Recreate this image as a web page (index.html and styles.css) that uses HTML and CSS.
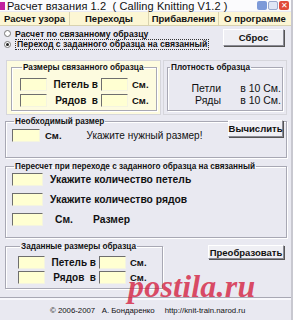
FILE: index.html
```html
<!DOCTYPE html>
<html>
<head>
<meta charset="utf-8">
<link rel="stylesheet" href="styles.css">
</head>
<body>
<div class="win">
  <div class="titlebar">
    <span class="appicon"></span>
    <span class="title">Расчет вязания 1.2&nbsp; ( Calling Knitting V1.2 )</span>
    <span class="wbtns">
      <span class="wb min"></span><span class="wb max"></span><span class="wb close">✕</span>
    </span>
  </div>
  <div class="tabs">
    <span class="tab t1">Расчет узора</span>
    <span class="tab t2">Переходы</span>
    <span class="tab t3">Прибавления</span>
    <span class="tab t4">О программе</span>
  </div>
  <div class="top">
    <div class="radios">
      <div class="radio"><span class="rb"></span>Расчет по связанному образцу</div>
      <div class="radio"><span class="rb on"></span><span class="focus">Переход с заданного образца на связанный</span></div>
    </div>
    <div class="btn reset">Сброс</div>
  </div>

  <div class="sec1">
    <div class="ypanel">
      <fieldset class="grp sizes">
        <legend>Размеры связанного образца</legend>
        <div class="frow"><span class="inp"></span><span class="lab l1">Петель в</span><span class="inp"></span><span class="cm">См.</span></div>
        <div class="frow"><span class="inp"></span><span class="lab l1">Рядов&nbsp; в</span><span class="inp"></span><span class="cm">См.</span></div>
      </fieldset>
    </div>
    <div class="gpanel">
      <fieldset class="grp dens">
        <legend>Плотность образца</legend>
        <div class="drow"><span class="dk">Петли</span><span class="dv">в 10 См.</span></div>
        <div class="drow"><span class="dk">Ряды</span><span class="dv">в 10 См.</span></div>
      </fieldset>
    </div>
  </div>

  <fieldset class="grp need">
    <legend>Необходимый размер</legend>
    <div class="needrow">
      <span class="inp wide"></span><span class="cm">См.</span><span class="hint">Укажите нужный размер!</span>
      <div class="btn calc">Вычислить</div>
    </div>
  </fieldset>

  <fieldset class="grp recalc">
    <legend>Пересчет при переходе с заданного образца на связанный</legend>
    <div class="rrow"><span class="inp wider"></span><span class="rl">Укажите количество петель</span></div>
    <div class="rrow"><span class="inp wider"></span><span class="rl">Укажите количество рядов</span></div>
    <div class="rrow"><span class="inp wider"></span><span class="rl sm">См.</span><span class="rl">Размер</span></div>
  </fieldset>

  <div class="sec4">
    <fieldset class="grp given">
      <legend>Заданные размеры образца</legend>
      <div class="frow"><span class="inp"></span><span class="lab l1">Петель в</span><span class="inp"></span><span class="cm">См.</span></div>
      <div class="frow"><span class="inp"></span><span class="lab l1">Рядов&nbsp; в</span><span class="inp"></span><span class="cm">См.</span></div>
    </fieldset>
    <div class="btn conv">Преобразовать</div>
  </div>

  <div class="footer">
    <span>© 2006-2007&nbsp;&nbsp; А. Бондаренко</span>
    <span>http://knit-train.narod.ru</span>
  </div>
  <div class="watermark">postila.ru</div>
</div>
</body>
</html>
```

FILE: styles.css
```css
* { box-sizing: border-box; }
html, body { margin: 0; padding: 0; }
body {
  width: 293px; height: 320px; overflow: hidden;
  font-family: "Liberation Sans", Arial, sans-serif;
  font-size: 10px; font-weight: bold; color: #111;
  background: #e9e9f1;
}
.win { position: relative; width: 293px; height: 320px; display: flex; flex-direction: column; background: #e9e9f1; border-right: 2px solid #c8c8d0; }

.titlebar { height: 11px; display: flex; align-items: center; background: #fbfbfd; font-weight: normal; font-size: 11px; color: #111; flex: none; }
.appicon { width: 5px; height: 8px; background: #c01fa0; margin-right: 2px; }
.title { flex: 1; white-space: nowrap; letter-spacing: 0.1px; }
.wbtns { display: flex; gap: 1px; margin-right: 2px; }
.wb { width: 10px; height: 9px; border-radius: 2px; background: #7d9ad8; }
.wb.max { background: #dfe6f5; border: 1px solid #9aa9cc; }
.wb.close { background: #e04a3a; color: #fff; font-size: 8px; line-height: 9px; text-align: center; }

.tabs { height: 14px; display: flex; background: #fcf6d4; border-bottom: 1px solid #d8d2b0; margin-top: 1px; flex: none; }
.tab { display: flex; align-items: center; justify-content: center; border-right: 1px solid #d8d2b0; font-size: 9.5px; white-space: nowrap; }
.t1 { width: 70px; }
.t2 { width: 79px; }
.t3 { width: 70px; }
.t4 { width: 72px; border-right: none; }

.top { display: flex; justify-content: space-between; padding: 2px 7px 0 4px; height: 34px; flex: none; }
.radios { display: flex; flex-direction: column; gap: 0; }
.radio { display: flex; align-items: center; height: 11px; font-size: 8.7px; white-space: nowrap; }
.rb { width: 7px; height: 7px; border-radius: 50%; border: 1px solid #777; background: #fff; margin-right: 4px; position: relative; }
.rb.on::after { content: ""; position: absolute; left: 1px; top: 1px; width: 3px; height: 3px; border-radius: 50%; background: #222; }
.focus { border: 1px dotted #333; padding: 0 1px; line-height: 9px; }

.btn { display: flex; align-items: center; justify-content: center; background: #efeff4; border: 1px solid #fff; border-right-color: #8a8a94; border-bottom-color: #8a8a94; box-shadow: 1px 1px 0 #555; font-size: 9.5px; flex: none; white-space: nowrap; }
.reset { width: 61px; height: 17px; margin-top: 1px; }

fieldset.grp { margin: 0; padding: 0; border: 1px solid #a8a8b4; box-shadow: inset 1px 1px 0 #fff, 1px 1px 0 #fff; min-width: 0; }
legend { padding: 0 1px; font-size: 8.2px; margin-left: 2px; white-space: nowrap; line-height: 11px; }

.sec1 { display: flex; gap: 2px; margin: 0 4px 0 6px; height: 55px; flex: none; }
.ypanel { width: 155px; background: #fdfbdf; padding: 1px 3px 3px 4px; border: 1px solid #d6d6dc; }
fieldset.sizes { height: 100%; padding: 3px 0 0 8px; }
.frow { display: flex; align-items: center; height: 16px; }
.inp { width: 27px; height: 13px; background: #ffffd2; border: 1px solid #f4f4e0; border-top-color: #6e6e6e; border-left-color: #6e6e6e; flex: none; }
.inp.wide { width: 28px; }
.inp.wider { width: 31px; }
.lab { font-size: 10px; white-space: nowrap; }
.l1 { width: 54px; text-align: right; padding-right: 3px; }
.cm { margin-left: 4px; font-size: 9.5px; }
.gpanel { flex: 1; padding: 1px 3px 3px 3px; border: 1px solid #d6d6dc; }
fieldset.dens { height: 100%; padding: 9px 0 0 0; }
.drow { display: flex; height: 12px; align-items: center; font-size: 10.5px; font-weight: normal; }
.dk { width: 53px; text-align: right; }
.dv { margin-left: auto; margin-right: 1px; }

fieldset.need { margin: 1px 4px 0 5px; height: 42px; padding: 2px 3px 0 6px; flex: none; }
.needrow { display: flex; align-items: flex-start; }
.need .cm { margin-left: 5px; line-height: 13px; }
.hint { margin-left: 25px; font-weight: normal; font-size: 10px; line-height: 13px; white-space: nowrap; }
.calc { width: 55px; height: 17px; margin-left: auto; margin-top: -9px; }

fieldset.recalc { margin: 3px 4px 0 5px; height: 77px; padding: 1px 0 0 6px; flex: none; }
.rrow { display: flex; align-items: flex-start; height: 20px; }
.rl { font-size: 10.3px; font-weight: bold; margin-left: 7px; line-height: 13px; white-space: nowrap; }
.rl.sm { margin-left: 12px; margin-right: 13px; }

.sec4 { display: flex; margin: 3px 4px 0 5px; height: 48px; flex: none; }
fieldset.given { width: 158px; padding: 4px 0 0 12px; height: 48px; }
.given .frow { height: 15px; align-items: flex-start; }
.given .lab, .given .cm { line-height: 13px; }
.conv { width: 76px; height: 14px; margin-left: auto; margin-top: 4px; margin-right: 3px; }

.footer { margin-top: auto; height: 22px; flex: none; border-top: 2px solid #f8f8fc; box-shadow: 0 -1px 0 #a8a8b4; display: flex; align-items: center; gap: 10px; padding-left: 50px; font-size: 7.8px; font-weight: normal; white-space: nowrap; }

.watermark { position: absolute; left: 128px; top: 270px; font-family: "Liberation Serif", serif; font-style: italic; font-weight: bold; font-size: 32px; letter-spacing: 0.2px; color: rgba(212, 30, 62, 0.8); line-height: 1; }
```
